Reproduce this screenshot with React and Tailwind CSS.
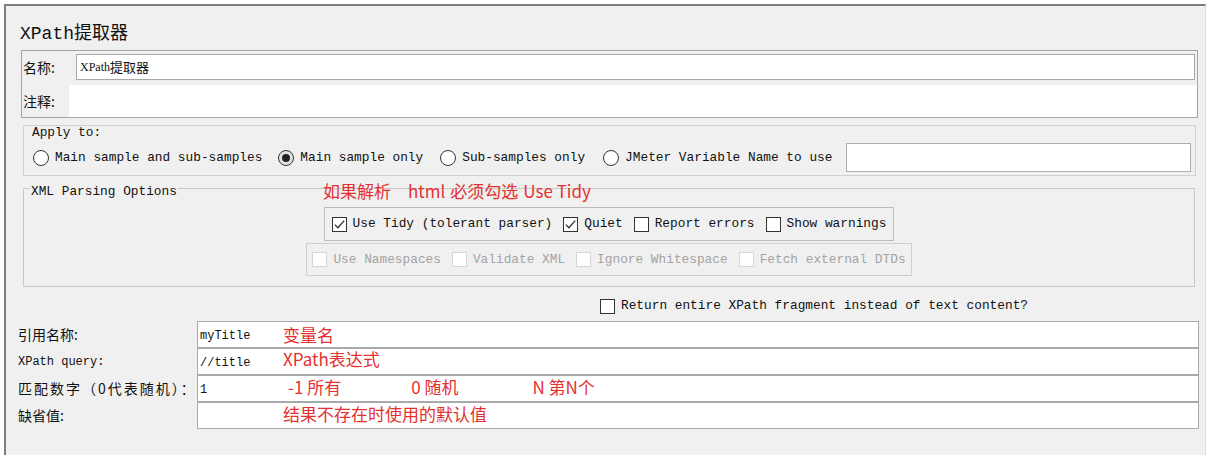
import React from "react";

const mono = "font-['Liberation_Mono','Noto_Sans_CJK_SC',monospace] text-[12.8px] text-[#111]";
const cjk = "font-['Noto_Sans_CJK_SC',sans-serif] text-[14px] text-[#111]";
const red = "font-['Noto_Sans_CJK_SC',sans-serif] text-[17px] leading-[20px] text-[#e4312f] whitespace-nowrap";

function CheckBox({ checked, disabled }) {
  return (
    <span
      className={
        disabled
          ? "w-[15px] h-[15px] border border-[#d6d6d6] bg-white shrink-0"
          : "w-[15px] h-[15px] border border-[#333] bg-white shrink-0 flex items-center justify-center"
      }
    >
      {checked && (
        <svg width="13" height="13" viewBox="0 0 13 13">
          <path d="M1.8 6.6 L4.9 9.8 L11.2 2.6" fill="none" stroke="#333" strokeWidth="1.3" />
        </svg>
      )}
    </span>
  );
}

function Radio({ selected }) {
  return (
    <span
      className={
        selected
          ? "w-[16px] h-[16px] rounded-full border border-[#333] bg-[#e2e2e2] flex items-center justify-center shrink-0"
          : "w-[16px] h-[16px] rounded-full border border-[#333] bg-white shrink-0"
      }
    >
      {selected && <span className="w-[8px] h-[8px] rounded-full bg-[#222]" />}
    </span>
  );
}

function Option({ label, checked, disabled }) {
  return (
    <span className="flex items-center gap-[6px]">
      <CheckBox checked={checked} disabled={disabled} />
      <span className={disabled ? "text-[#a3a3a3]" : ""}>{label}</span>
    </span>
  );
}

function Field({ label, labelClass, value, children }) {
  return (
    <div className="h-[27px] flex items-center">
      <span className={"w-[191px] pl-[12px] whitespace-nowrap " + labelClass}>{label}</span>
      <div className="flex-1 mr-[6px] h-full border border-[#a9a9a9] bg-white flex items-center">
        <span className="w-[85px] pl-[2px] pt-[3px] font-['Liberation_Mono',monospace] text-[12px] text-[#111]">
          {value}
        </span>
        {children}
      </div>
    </div>
  );
}

export default function App() {
  return (
    <div className="w-[1213px] h-[462px] bg-white pt-[4px] pl-[4px]">
      <div className="w-[1202px] h-[451px] bg-[#f0f0f0] border-t-2 border-l-2 border-r border-t-[#7d7d7d] border-l-[#7d7d7d] border-r-[#dedede] flex flex-col">
        {/* title */}
        <div className="h-[44px] pt-[12px] pl-[14px] flex items-center font-['Liberation_Mono','Noto_Sans_CJK_SC',monospace] text-[18px] text-[#111]">
          XPath提取器
        </div>

        {/* name / comment */}
        <div className="ml-[15px] mr-[7px] border border-[#a5a5a5] flex flex-col">
          <div className="mt-[3px] h-[26px] flex items-center">
            <span className={"w-[54px] pl-[1px] " + cjk}>名称:</span>
            <div className="flex-1 mr-[2px] h-full border border-[#a8a8a8] bg-white flex items-center pl-[3px]">
              <span className="font-['Liberation_Serif',serif] text-[12px] text-[#111]">XPath</span>
              <span className="font-['Noto_Sans_CJK_SC',sans-serif] text-[13px] text-[#111]">提取器</span>
            </div>
          </div>
          <div className="mt-[5px] h-[32px] flex items-center">
            <span className={"w-[47px] pl-[1px] " + cjk}>注释:</span>
            <div className="flex-1 h-full bg-white" />
          </div>
        </div>

        {/* apply to */}
        <div className={"mt-[7px] ml-[17px] mr-[9px] border border-[#d0d0d0] flex flex-col " + mono}>
          <div className="h-[14px] leading-[14px] pl-[8px]">Apply to:</div>
          <div className="h-[35px] flex items-center pl-[9px] pr-[4px] whitespace-nowrap">
            <span className="flex items-center gap-[6px]">
              <Radio />
              Main sample and sub-samples
            </span>
            <span className="flex items-center gap-[6px] ml-[16px]">
              <Radio selected />
              Main sample only
            </span>
            <span className="flex items-center gap-[6px] ml-[17px]">
              <Radio />
              Sub-samples only
            </span>
            <span className="flex items-center gap-[6px] ml-[18px]">
              <Radio />
              JMeter Variable Name to use
            </span>
            <div className="ml-[14px] flex-1 h-[29px] border border-[#abadb3] bg-white" />
          </div>
        </div>

        {/* xml parsing options */}
        <div className={"relative mt-[12px] ml-[17px] mr-[10px] border border-[#c9c9c9] pb-[10px] flex flex-col items-center " + mono}>
          <div className="self-start -mt-[5px] ml-[6px] px-[1px] bg-[#f0f0f0] h-[16px] leading-[16px]">
            XML Parsing Options
          </div>
          <div className="absolute left-[299px] -top-[8px] flex">
            <span className={red}>如果解析</span>
            <span className={red + " ml-[17px]"}>html</span>
            <span className={red + " ml-[5px]"}>必须勾选</span>
            <span className={red + " ml-[5px]"}>Use Tidy</span>
          </div>
          <div className="mt-[7px] h-[34px] border border-[#bcbcbc] flex items-center px-[7px] gap-[11px] whitespace-nowrap">
            <Option label="Use Tidy (tolerant parser)" checked />
            <Option label="Quiet" checked />
            <Option label="Report errors" />
            <Option label="Show warnings" />
          </div>
          <div className="mt-[2px] h-[33px] border border-[#cfcfcf] flex items-center px-[5px] gap-[11px] whitespace-nowrap">
            <Option label="Use Namespaces" disabled />
            <Option label="Validate XML" disabled />
            <Option label="Ignore Whitespace" disabled />
            <Option label="Fetch external DTDs" disabled />
          </div>
        </div>

        {/* return fragment */}
        <div className={"mt-[9px] h-[20px] pl-[594px] flex items-center whitespace-nowrap " + mono}>
          <Option label="Return entire XPath fragment instead of text content?" />
        </div>

        {/* fields */}
        <div className="mt-[5px] flex flex-col">
          <Field label="引用名称:" labelClass={cjk} value="myTitle">
            <span className={red}>变量名</span>
          </Field>
          <Field
            label="XPath query:"
            labelClass="font-['Liberation_Mono',monospace] text-[12px] text-[#111]"
            value="//title"
          >
            <span className={red + " -mt-[6px]"}>XPath表达式</span>
          </Field>
          <Field label="匹配数字（0代表随机）：" labelClass={cjk + " tracking-[2px]"} value="1">
            <span className={red + " ml-[5px] -mt-[4px]"}>-1 所有</span>
            <span className={red + " ml-[70px] -mt-[4px]"}>0 随机</span>
            <span className={red + " ml-[74px] -mt-[4px]"}>N 第N个</span>
          </Field>
          <Field label="缺省值:" labelClass={cjk} value="">
            <span className={red + " -mt-[4px]"}>结果不存在时使用的默认值</span>
          </Field>
        </div>
      </div>
    </div>
  );
}
